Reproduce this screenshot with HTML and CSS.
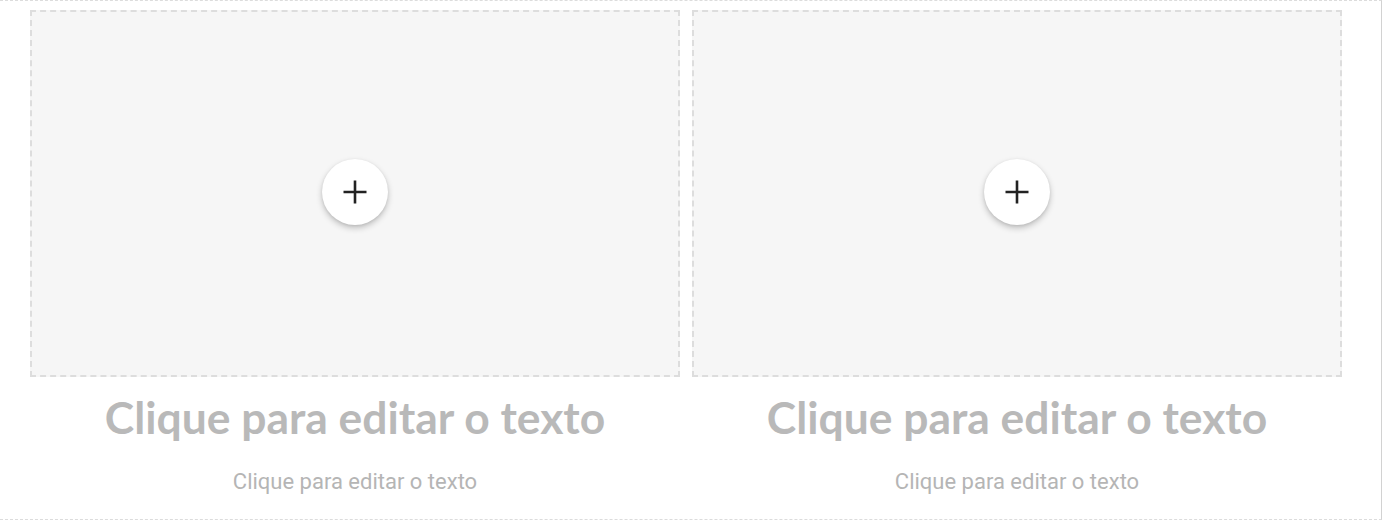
FILE: index.html
```html
<!DOCTYPE html>
<html lang="pt">
<head>
<meta charset="utf-8">
<link rel="stylesheet" href="styles.css">
</head>
<body>
<section class="section">
  <div class="cards">
    <div class="card">
      <div class="media">
        <button class="add" aria-label="Adicionar">
          <svg width="24" height="24" viewBox="0 0 24 24"><path d="M12 0.5v23M0.5 12h23" stroke="#222" stroke-width="2.6" fill="none"/></svg>
        </button>
      </div>
      <h2 class="title">Clique para editar o texto</h2>
      <p class="text">Clique para editar o texto</p>
    </div>
    <div class="card">
      <div class="media">
        <button class="add" aria-label="Adicionar">
          <svg width="24" height="24" viewBox="0 0 24 24"><path d="M12 0.5v23M0.5 12h23" stroke="#222" stroke-width="2.6" fill="none"/></svg>
        </button>
      </div>
      <h2 class="title">Clique para editar o texto</h2>
      <p class="text">Clique para editar o texto</p>
    </div>
  </div>
</section>
</body>
</html>
```
FILE: styles.css
```css
html, body {
  margin: 0;
  padding: 0;
  background: #fff;
}
.section {
  box-sizing: border-box;
  width: 1382px;
  height: 520px;
  border-top: 1px dashed #dcdcdc;
  border-bottom: 1px dashed #dcdcdc;
  border-right: 1px solid #d2d2d2;
  padding: 9px 0 0 30px;
}
.cards {
  display: flex;
  gap: 12px;
}
.card {
  width: 650px;
  display: flex;
  flex-direction: column;
  align-items: center;
}
.media {
  box-sizing: border-box;
  width: 650px;
  height: 367px;
  border: 2px dashed #dddddd;
  background: #f6f6f6;
  display: flex;
  align-items: center;
  justify-content: center;
}
.add {
  width: 66px;
  height: 66px;
  border-radius: 50%;
  border: none;
  background: #fff;
  box-shadow: 0 3px 6px rgba(0,0,0,0.22), 0 1px 3px rgba(0,0,0,0.08);
  display: flex;
  align-items: center;
  justify-content: center;
  padding: 0;
  margin-top: -3px;
}
.title {
  margin: 13px 0 0;
  font-family: Lato, "Liberation Sans", sans-serif;
  font-weight: 700;
  font-size: 44.4px;
  line-height: 54px;
  color: #b9b9b9;
}
.text {
  margin: 25px 0 0;
  font-family: Roboto, "Liberation Sans", sans-serif;
  font-size: 22px;
  line-height: 26px;
  color: #b5b5b5;
}
```
